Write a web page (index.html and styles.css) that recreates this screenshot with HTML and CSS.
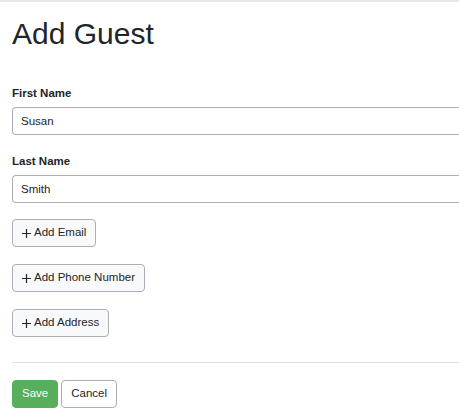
FILE: index.html
```html
<!DOCTYPE html>
<html lang="en">
<head>
<meta charset="utf-8">
<title>Add Guest</title>
<link rel="stylesheet" href="styles.css">
</head>
<body>
<div class="topbar"></div>
<main class="page">
  <h1 class="title">Add Guest</h1>
  <form class="form">
    <div class="field">
      <label class="label" for="first">First Name</label>
      <input class="input" id="first" type="text" value="Susan">
    </div>
    <div class="field">
      <label class="label" for="last">Last Name</label>
      <input class="input" id="last" type="text" value="Smith">
    </div>
    <div class="adders">
      <button type="button" class="btn btn-add"><svg class="plus" viewBox="0 0 9 9" width="9" height="9"><path d="M4.5 0V9M0 4.5H9" stroke="currentColor" stroke-width="1.2" fill="none"/></svg>Add Email</button>
      <button type="button" class="btn btn-add"><svg class="plus" viewBox="0 0 9 9" width="9" height="9"><path d="M4.5 0V9M0 4.5H9" stroke="currentColor" stroke-width="1.2" fill="none"/></svg>Add Phone Number</button>
      <button type="button" class="btn btn-add"><svg class="plus" viewBox="0 0 9 9" width="9" height="9"><path d="M4.5 0V9M0 4.5H9" stroke="currentColor" stroke-width="1.2" fill="none"/></svg>Add Address</button>
    </div>
    <hr class="divider">
    <div class="actions">
      <button type="submit" class="btn btn-save">Save</button>
      <button type="button" class="btn btn-cancel">Cancel</button>
    </div>
  </form>
</main>
</body>
</html>
```
FILE: styles.css
```css
html, body {
  margin: 0;
  padding: 0;
  background: #ffffff;
}
body {
  font-family: "Liberation Sans", Arial, sans-serif;
  font-size: 11.5px;
  color: #212529;
}
.topbar {
  height: 2px;
  background: #e6e8eb;
}
.page {
  padding: 14px 0 0 12px;
}
.title {
  margin: 0;
  font-size: 30px;
  font-weight: 400;
  line-height: 36px;
  color: #212529;
}
.form {
  display: flex;
  flex-direction: column;
  margin-top: 32px;
}
.field {
  display: flex;
  flex-direction: column;
  margin-bottom: 17px;
}
.field:nth-child(2) {
  margin-bottom: 16px;
}
.label {
  font-weight: 700;
  line-height: 18px;
  margin-bottom: 5px;
}
.input {
  box-sizing: border-box;
  height: 28px;
  width: 100%;
  border: 1px solid #aab0b6;
  border-right: 0;
  border-radius: 4px 0 0 4px;
  padding: 0 8px;
  font-family: inherit;
  font-size: 11.5px;
  color: #212529;
  background: #fff;
}
.adders {
  display: flex;
  flex-direction: column;
  align-items: flex-start;
  gap: 17px;
}
.btn {
  box-sizing: border-box;
  height: 28px;
  border-radius: 4px;
  font-family: inherit;
  font-size: 11.5px;
  line-height: 1;
  display: inline-flex;
  align-items: center;
  cursor: pointer;
}
.btn-add {
  padding: 0 9px;
  border: 1px solid #aab0b6;
  background: #f8f9fa;
  color: #212529;
}
.plus {
  margin-right: 3px;
}
.divider {
  width: 100%;
  margin: 25px 0 17px;
  border: 0;
  border-top: 1px solid #dee2e6;
  height: 0;
}
.actions {
  display: flex;
  gap: 3px;
}
.btn-save {
  padding: 0 9px;
  border: 1px solid #57ae5b;
  background: #57ae5b;
  color: #ffffff;
}
.btn-cancel {
  padding: 0 9px;
  border: 1px solid #aab0b6;
  background: #ffffff;
  color: #212529;
}
```
